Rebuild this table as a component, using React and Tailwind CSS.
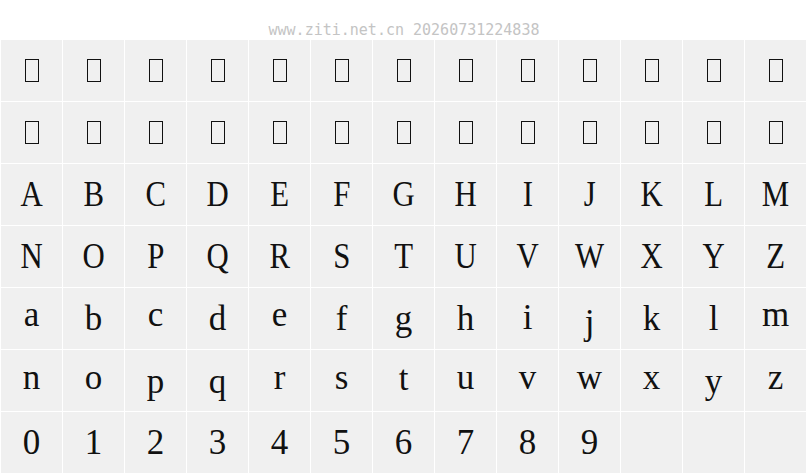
import React from "react";

const upper1 = "ABCDEFGHIJKLM".split("");
const upper2 = "NOPQRSTUVWXYZ".split("");
const lower1 = "abcdefghijklm".split("");
const lower2 = "nopqrstuvwxyz".split("");
const digits = "0123456789".split("");

const offsets = {
  a: "-translate-y-[4px]",
  c: "-translate-y-[4px]",
  e: "-translate-y-[4px]",
  m: "-translate-y-[4px]",
  n: "-translate-y-[3px]",
  o: "-translate-y-[3px]",
  r: "-translate-y-[3px]",
  s: "-translate-y-[3px]",
  u: "-translate-y-[3px]",
  v: "-translate-y-[3px]",
  w: "-translate-y-[3px]",
  x: "-translate-y-[3px]",
  z: "-translate-y-[3px]",
  t: "-translate-y-[2px]",
  i: "-translate-y-[1px]",
  j: "translate-y-[4px]",
  p: "translate-y-[1px]",
  q: "translate-y-[1px]",
  y: "translate-y-[1px]",
};

function Cell({ children }) {
  return (
    <div className="flex items-center justify-center bg-[#f0f0f0] h-[61px] w-[61px]">
      {children}
    </div>
  );
}

function Glyph({ ch, caps }) {
  const off = offsets[ch] || "";
  return (
    <Cell>
      <span
        className={`inline-block font-['Liberation_Serif',serif] text-[35px] leading-none text-[#111] ${off} ${
          caps ? "scale-x-[0.88]" : ""
        }`}
      >
        {ch}
      </span>
    </Cell>
  );
}

function Tofu() {
  return (
    <Cell>
      <div className="w-[14px] h-[23px] border border-[#111]" />
    </Cell>
  );
}

export default function App() {
  const tofus = Array.from({ length: 26 });
  return (
    <div className="w-[808px] h-[476px] bg-white overflow-hidden">
      <div className="h-[40px] pt-[23px] text-center font-['DejaVu_Sans_Mono',monospace] text-[15px] leading-[15px] text-[#c4c4c4]">
        www.ziti.net.cn 20260731224838
      </div>
      <div className="grid grid-cols-[repeat(13,61px)] auto-rows-[61px] gap-px pl-px">
        {tofus.map((_, i) => (
          <Tofu key={"t" + i} />
        ))}
        {upper1.map((c) => (
          <Glyph key={c} ch={c} caps />
        ))}
        {upper2.map((c) => (
          <Glyph key={c} ch={c} caps />
        ))}
        {lower1.map((c) => (
          <Glyph key={c} ch={c} />
        ))}
        {lower2.map((c) => (
          <Glyph key={c} ch={c} />
        ))}
        {digits.map((c) => (
          <Glyph key={c} ch={c} />
        ))}
        <Cell />
        <Cell />
        <Cell />
      </div>
    </div>
  );
}
